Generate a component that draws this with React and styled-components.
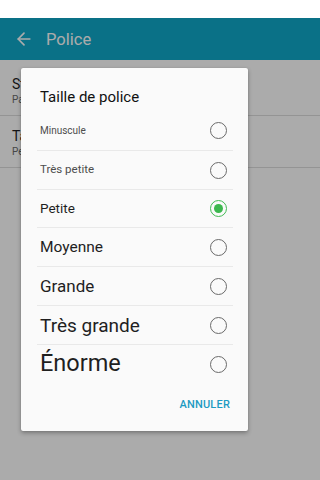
import React, { useState } from 'react';
import styled, { createGlobalStyle } from 'styled-components';
import { ArrowLeft } from 'lucide-react';

const GlobalStyle = createGlobalStyle`
  html, body {
    margin: 0;
    padding: 0;
    background: #ffffff;
    font-family: Roboto, "Noto Sans", "Liberation Sans", sans-serif;
  }
  * { box-sizing: border-box; }
`;

const Screen = styled.div`
  position: relative;
  width: 100%;
  height: 480px;
  overflow: hidden;
  background: #ffffff;
  display: flex;
  flex-direction: column;
`;

const StatusBar = styled.div`
  height: 18px;
  background: #ffffff;
`;

const AppBar = styled.header`
  height: 42px;
  background: #0fa9ca;
  display: flex;
  align-items: center;
  padding-left: 14px;
  gap: 12px;
  color: #ffffff;
`;

const AppTitle = styled.h1`
  margin: 0;
  font-size: 16.5px;
  font-weight: 400;
`;

const SettingsList = styled.div`
  padding-top: 4px;
`;

const SettingRow = styled.div`
  height: 52px;
  padding: 3px 12px 0;
  display: flex;
  flex-direction: column;
  justify-content: center;
  border-bottom: 1px solid #dddddd;
`;

const SettingName = styled.div`
  font-size: 14px;
  color: #1e1e1e;
  line-height: 18px;
`;

const SettingValue = styled.div`
  font-size: 10px;
  color: #6a6a6a;
  line-height: 14px;
`;

const Scrim = styled.div`
  position: absolute;
  top: 18px;
  left: 0;
  right: 0;
  bottom: 0;
  background: rgba(0, 0, 0, 0.33);
  padding: 50px 0 0 21px;
`;

const Dialog = styled.div`
  width: 227px;
  background: #fafafa;
  border-radius: 2px;
  box-shadow: 0 2px 4px rgba(0, 0, 0, 0.3), 0 0 1px rgba(0, 0, 0, 0.2);
  display: flex;
  flex-direction: column;
`;

const DialogTitle = styled.h2`
  margin: 0;
  padding: 19px 16px 4px 19px;
  font-size: 15px;
  line-height: 20px;
  font-weight: 400;
  color: #111111;
`;

const Options = styled.div`
  padding: 0 15px 0 16px;
`;

const Option = styled.label`
  height: 38.8px;
  display: flex;
  align-items: center;
  justify-content: space-between;
  padding: 1px 6px 0 3px;
  border-top: ${(props) => (props.first ? 'none' : '1px solid #e9e9e9')};
  cursor: pointer;
`;

const OptionText = styled.span`
  font-size: ${(props) => props.size}px;
  color: ${(props) => (props.size < 12 ? '#4d4d4d' : '#1f1f1f')};
  line-height: 1;
`;

const Radio = styled.span`
  width: 17px;
  height: 17px;
  border-radius: 50%;
  border: 1.3px solid ${(props) => (props.checked ? '#43bb55' : '#6a6a6a')};
  display: flex;
  align-items: center;
  justify-content: center;
  &::after {
    content: '';
    width: 9px;
    height: 9px;
    border-radius: 50%;
    background: #3cb84e;
    display: ${(props) => (props.checked ? 'block' : 'none')};
  }
`;

const Actions = styled.div`
  display: flex;
  justify-content: flex-end;
  padding: 14px 18px 18px;
`;

const TextButton = styled.button`
  border: 0;
  background: none;
  padding: 0;
  font-family: inherit;
  font-size: 11px;
  line-height: 16px;
  font-weight: 500;
  letter-spacing: 0.2px;
  color: #1d9bc2;
`;

const sizes = [
  { label: 'Minuscule', size: 10 },
  { label: 'Très petite', size: 11.5 },
  { label: 'Petite', size: 13.5 },
  { label: 'Moyenne', size: 15.5 },
  { label: 'Grande', size: 17 },
  { label: 'Très grande', size: 19 },
  { label: 'Énorme', size: 23.5 },
];

const App = () => {
  const [selected, setSelected] = useState('Petite');
  return (
    <Screen>
      <GlobalStyle />
      <StatusBar />
      <AppBar>
        <ArrowLeft size={20} strokeWidth={2} />
        <AppTitle>Police</AppTitle>
      </AppBar>
      <SettingsList>
        <SettingRow>
          <SettingName>Style de police</SettingName>
          <SettingValue>Par défaut</SettingValue>
        </SettingRow>
        <SettingRow>
          <SettingName>Taille de police</SettingName>
          <SettingValue>Petite</SettingValue>
        </SettingRow>
      </SettingsList>
      <Scrim>
        <Dialog>
          <DialogTitle>Taille de police</DialogTitle>
          <Options>
            {sizes.map((item, i) => (
              <Option key={item.label} first={i === 0} onClick={() => setSelected(item.label)}>
                <OptionText size={item.size}>{item.label}</OptionText>
                <Radio checked={selected === item.label} />
              </Option>
            ))}
          </Options>
          <Actions>
            <TextButton>ANNULER</TextButton>
          </Actions>
        </Dialog>
      </Scrim>
    </Screen>
  );
};

export default App;
